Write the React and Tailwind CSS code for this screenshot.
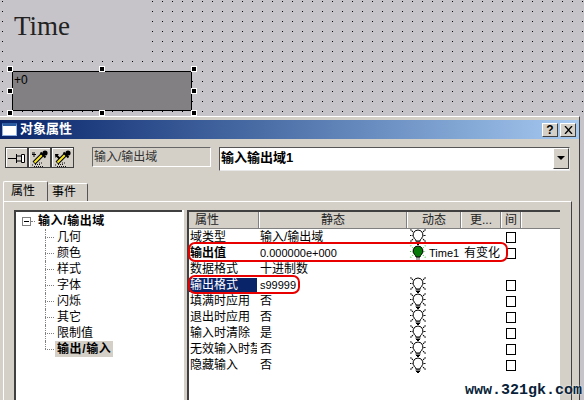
const CJK = "font-['SimSun','Liberation_Sans','Noto_Sans_CJK_SC',sans-serif]";

function Bulb({ on }) {
  const ray = on ? "#2fd62f" : "#000";
  return (
    <svg width="16" height="16" viewBox="0 0 16 16" className="shrink-0">
      <path d="M0.500 0.500l3 3M15.500 0.500l-3 3M0 6.500h2.500M13.500 6.500h2.500M0.500 12.500l3-3M15.500 12.500l-3-3" stroke={ray} strokeWidth="1.100" strokeDasharray={on ? "1 1.500" : "1.400 .6"} fill="none" />
      <path d="M8 1a5 5 0 0 0-3.300 8.700c.8.8 1.300 1.400 1.300 2.300h4c0-.9.500-1.500 1.300-2.300A5 5 0 0 0 8 1z" fill={on ? "#067a06" : "#fff"} stroke="#000" />
      {on ? (
        <path d="M6 12.500h4M6 14h4M7 15.500h2" stroke="#555" />
      ) : (
        <path d="M5.500 13h5M6 14.500h4M7 15.500h2" stroke="#000" strokeWidth="1.200" />
      )}
    </svg>
  );
}

function Handle({ cls }) {
  return <div className={`absolute w-[6px] h-[6px] bg-black border border-white ${cls}`} />;
}

function ToolButton({ children }) {
  return (
    <div className="w-[23px] h-[21px] border border-[#404040] bg-[#d4d0c8]">
      <div className="w-full h-full border-t border-l border-t-white border-l-white flex items-center justify-center">
        {children}
      </div>
    </div>
  );
}

function Dropper({ flip }) {
  return (
    <svg width="18" height="17" viewBox="0 0 18 17">
      <path d="M3 13L11 5" stroke="#000" strokeWidth="4" />
      <path d="M3.500 12.500L11 5" stroke="#f8e71c" strokeWidth="2" />
      <path d="M9.500 2.500l5 5" stroke="#000" strokeWidth="2" />
      <circle cx="14" cy="3" r="2.600" fill="#000" />
      {flip ? (
        <path d="M1 4l4 0l-1.300 1.300l2.500 2.500l-1.400 1.400l-2.500-2.500L1.500 8z" fill="#000" />
      ) : (
        <path d="M1 3h1M1 4.500h4M3 2v5" stroke="#000" />
      )}
      <path d="M1 15h2M4 14.500h6M3 16.500h9M8 13h3" stroke="#111" strokeDasharray="1 1" />
    </svg>
  );
}

const rows = [
  ["域类型", "输入/输出域", true, true],
  ["输出值", "0.000000e+000", "on", true],
  ["数据格式", "十进制数", false, false],
  ["输出格式", "s99999", true, true],
  ["填满时应用", "否", true, true],
  ["退出时应用", "否", true, true],
  ["输入时清除", "是", true, true],
  ["无效输入时禁", "否", true, true],
  ["隐藏输入", "否", true, true],
];

const treeItems = ["几何", "颜色", "样式", "字体", "闪烁", "其它", "限制值", "输出/输入"];

export default function App() {
  return (
    <div className={`relative w-[584px] h-[400px] overflow-hidden bg-[#c6c4c8] text-black text-[12px] leading-[16px] ${CJK}`}>
      {/* design canvas */}
      <div className="relative h-[116px] bg-[#c6c4c8] bg-[radial-gradient(circle_at_2.5px_1.5px,#000_0.75px,transparent_0.95px)] bg-[length:10px_10px]">
        <div className="absolute left-[4px] top-0 w-[146px] h-[58px] bg-[#c6c4c8] pl-[10px] pt-[11px] font-['Liberation_Serif',serif] text-[27px] leading-[30px] text-[#222] tracking-[0px]">
          Time
        </div>
        <div className="absolute left-[12px] top-[71px] w-[180px] h-[40px] bg-[#828082] border border-black pl-[1px] pt-[1px] font-['Liberation_Sans',sans-serif] text-[12px] leading-[14px]">
          +0
        </div>
        <Handle cls="left-[7px] top-[66px]" />
        <Handle cls="left-[99px] top-[66px]" />
        <Handle cls="left-[191px] top-[66px]" />
        <Handle cls="left-[7px] top-[88px]" />
        <Handle cls="left-[191px] top-[88px]" />
        <Handle cls="left-[7px] top-[110px]" />
        <Handle cls="left-[99px] top-[110px]" />
        <Handle cls="left-[191px] top-[110px]" />
      </div>

      {/* dialog */}
      <div className="w-[580px] h-[284px] bg-[#d4d0c8] border-t border-t-white border-r border-r-[#404040] pt-[3px]">
        {/* title bar */}
        <div className="h-[19px] flex items-center justify-between pl-[2px] pr-[3px] bg-gradient-to-r from-[#0a246a] to-[#a6caf0] mb-[1px]">
          <div className="flex items-center gap-[3px] pb-[2px]">
            <div className="w-[15px] h-[13px] mt-[2px] bg-white border border-[#8fb0e0] border-t-[3px] border-t-[#2a5aa0]" />
            <span className="text-white font-bold text-[13px]">对象属性</span>
          </div>
          <div className="flex gap-[2px]">
            <div className="w-[16px] h-[14px] bg-[#d4d0c8] border border-t-white border-l-white border-r-[#404040] border-b-[#404040] flex items-center justify-center font-['Liberation_Sans',sans-serif] font-bold text-[12px]">?</div>
            <div className="w-[16px] h-[14px] bg-[#d4d0c8] border border-t-white border-l-white border-r-[#404040] border-b-[#404040] flex items-center justify-center">
              <svg width="9" height="8" viewBox="0 0 9 8"><path d="M1 0l7 8M8 0l-7 8" stroke="#000" strokeWidth="1.300" /></svg>
            </div>
          </div>
        </div>

        {/* toolbar */}
        <div className="flex items-start h-[40px] pt-[7px] pl-[5px]">
          <div className="flex gap-0">
            <ToolButton>
              <svg width="18" height="13" viewBox="0 0 18 13">
                <path d="M0 6.500h8" stroke="#000" />
                <path d="M8.500 2v9M8.500 4h5M8.500 9h5M13.500 2.500h3v8h-3z" stroke="#000" fill="#fff" />
              </svg>
            </ToolButton>
            <ToolButton><Dropper /></ToolButton>
            <ToolButton><Dropper flip /></ToolButton>
          </div>
          <div className="ml-[18px] w-[119px] h-[20px] border border-t-[#666] border-l-[#666] border-r-white border-b-white pl-[1px] text-[#333] text-[12px] leading-[19px]">
            输入/输出域
          </div>
          <div className="ml-[8px] w-[351px] h-[24px] bg-white border border-t-[#555] border-l-[#555] border-r-[#e8e8e8] border-b-[#e8e8e8] flex justify-between font-bold text-[13px] pl-[1px]">
            <span className="leading-[19px]">输入输出域1</span>
            <div className="w-[16px] h-[21px] bg-[#d4d0c8] border border-t-white border-l-white border-r-[#404040] border-b-[#404040] flex items-center justify-center">
              <svg width="9" height="5" viewBox="0 0 9 5"><path d="M0 0h8L4 4z" fill="#000" /></svg>
            </div>
          </div>
        </div>

        {/* tabs */}
        <div className="flex pl-[3px] h-[21px] items-end">
          <div className="w-[45px] h-[20px] border border-b-0 border-t-white border-l-white border-r-[#555] rounded-t-[2px] pl-[7px] pt-[1px] text-[12px] bg-[#d4d0c8]">属性</div>
          <div className="w-[40px] h-[18px] border border-b-0 border-t-white border-l-0 border-r-[#555] rounded-t-[2px] pl-[4px] text-[12px]">事件</div>
        </div>

        {/* tab panel */}
        <div className="ml-[3px] w-[569px] h-[200px] border-t border-t-white border-l border-l-white border-r border-r-[#404040] pl-[10px] pt-[8px] flex">
          {/* tree */}
          <div className="w-[168px] h-[200px] bg-white border-t-2 border-l-2 border-t-[#404040] border-l-[#404040] pl-[6px] pt-[1px] flex flex-col shrink-0">
            <div className="flex items-center h-[16px]">
              <div className="w-[9px] h-[9px] border border-[#808080] flex items-center justify-center">
                <div className="w-[5px] h-px bg-black" />
              </div>
              <div className="w-[4px] border-t border-dotted border-[#808080]" />
              <span className="ml-[3px] font-bold tracking-[0.6px]">输入/输出域</span>
            </div>
            {treeItems.map((t, i) => {
              const last = i === treeItems.length - 1;
              return (
                <div key={t} className="flex items-center h-[16px] pl-[23px] relative">
                  <div className={`absolute left-[23px] top-0 border-l border-dotted border-[#808080] ${last ? "h-[8px]" : "h-[16px]"}`} />
                  <div className="w-[9px] border-t border-dotted border-[#808080]" />
                  <span className={last ? "ml-[1px] bg-[#d4d0c8] font-bold tracking-[0.6px] px-[2px]" : "ml-[3px]"}>{t}</span>
                </div>
              );
            })}
          </div>

          {/* splitter */}
          <div className="w-[5px] h-full border-l-2 border-l-white shrink-0" />

          {/* grid */}
          <div className="w-[373px] h-[200px] bg-white border-t-2 border-l-2 border-t-[#404040] border-l-[#404040] shrink-0 flex flex-col">
            <div className="flex h-[17px] bg-[#d4d0c8] text-[#222] border-b border-b-[#808080] leading-[17px]">
              <div className="w-[70px] pl-[6px] border-r border-r-[#808080]">属性</div>
              <div className="w-[148px] text-center border-l border-l-white border-r border-r-[#808080]">静态</div>
              <div className="w-[54px] text-center border-l border-l-white border-r border-r-[#808080]">动态</div>
              <div className="w-[40px] text-center border-l border-l-white border-r border-r-[#808080]">更...</div>
              <div className="w-[20px] text-center border-l border-l-white border-r border-r-[#808080]">间</div>
              <div className="flex-1 border-l border-l-white" />
            </div>
            {rows.map(([name, val, bulb, check], i) => (
              <div key={name} className="flex h-[16px] items-center">
                <div className="w-[70px] h-[16px] flex items-center overflow-hidden shrink-0">
                  <span className={`block w-[68px] pl-[1px] h-[14px] leading-[14px] overflow-hidden whitespace-nowrap ${i === 3 ? "bg-[#0a246a] text-white" : ""} ${i === 1 ? "font-bold" : ""}`}>{name}</span>
                </div>
                <div className={`w-[148px] pl-[1px] whitespace-nowrap ${/[0-9]/.test(val) ? "font-['Liberation_Sans',sans-serif] text-[11px]" : ""}`}>{val}</div>
                <div className="w-[54px] pl-[3px] flex items-center whitespace-nowrap">
                  {bulb && <Bulb on={bulb === "on"} />}
                  {bulb === "on" && <span className="ml-[3px] font-['Liberation_Sans',sans-serif] text-[11px]">Time1</span>}
                </div>
                <div className="w-[40px] pl-[3px] whitespace-nowrap">{bulb === "on" ? "有变化" : ""}</div>
                <div className="w-[20px] flex justify-center">
                  {check && <div className="w-[10px] h-[11px] border border-black bg-white" />}
                </div>
              </div>
            ))}
          </div>
        </div>
      </div>

      {/* annotations over the grid */}
      <div className="absolute left-[188px] top-[242px] w-[320px] h-[20px] border-[2px] border-[#e80000] rounded-[7px] pointer-events-none" />
      <div className="absolute left-[188px] top-[275px] w-[112px] h-[19px] border-[2px] border-[#e80000] rounded-[7px] pointer-events-none" />
      <div className="absolute left-[465px] top-[382px] whitespace-nowrap font-['Liberation_Mono',monospace] font-bold text-[15px] leading-[18px] text-[#0a1f3a] [text-shadow:0_0_2px_#fff]">www.321gk.com</div>
    </div>
  );
}
